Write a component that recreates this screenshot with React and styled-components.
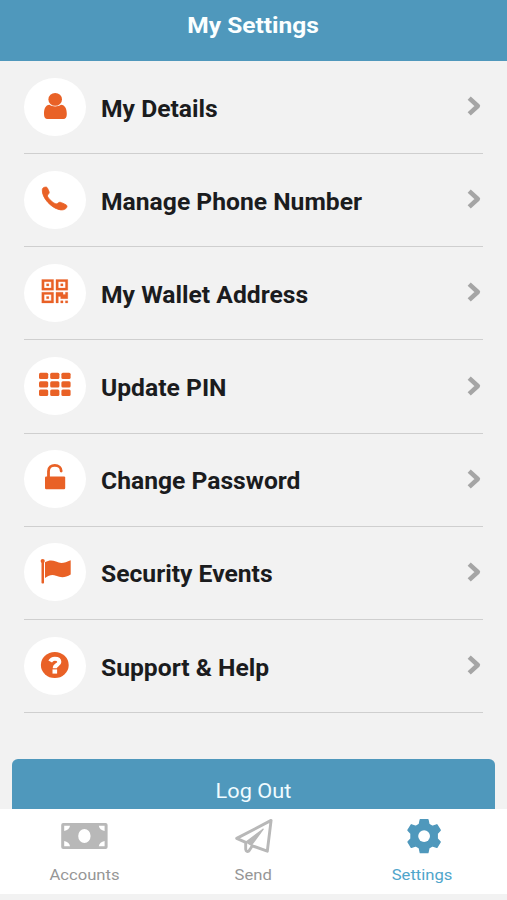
import React from "react";
import styled, { createGlobalStyle } from "styled-components";

const GlobalStyle = createGlobalStyle`
  * { box-sizing: border-box; }
  html, body { margin: 0; padding: 0; overflow: hidden; background: #f2f2f2; }
`;

const Screen = styled.div`
  display: flex;
  flex-direction: column;
  height: 900px;
  overflow: hidden;
  background: #f2f2f2;
  font-family: Roboto, "Liberation Sans", sans-serif;
`;

const Header = styled.header`
  flex: none;
  display: flex;
  justify-content: center;
  height: 61px;
  padding-top: 9px;
  background: #4f98bc;
`;

const Title = styled.h1`
  margin: 0;
  font-size: 22.4px;
  line-height: 33px;
  font-weight: 700;
  color: #fbffff;
  transform: scaleX(1.095);
`;

const Content = styled.main`
  flex: 1;
  min-height: 0;
  display: flex;
  flex-direction: column;
  overflow: hidden;
`;

const List = styled.ul`
  flex: none;
  list-style: none;
  margin: 0 24px;
  padding: 0;
`;

const Row = styled.li`
  display: flex;
  align-items: center;
  height: 93.17px;
  padding-bottom: 1px;
  border-bottom: 1.5px solid #cfcfcf;
`;

const IconDisc = styled.div`
  flex: none;
  width: 62px;
  height: 58px;
  border-radius: 50%;
  background: #fff;
  color: #e96126;
`;

const RowIcon = styled.svg`
  display: block;
  width: 62px;
  height: 58px;
  fill: currentColor;
`;

const RowLabel = styled.span`
  flex: 1;
  margin: 6px 0 0 15px;
  font-size: 23px;
  line-height: 30px;
  font-weight: 700;
  color: #1b1c1e;
  white-space: nowrap;
  transform: scaleX(1.072);
  transform-origin: left center;
`;

const Chevron = styled.svg`
  flex: none;
  width: 15px;
  height: 20px;
  margin-right: 1px;
  margin-bottom: 1px;
  fill: none;
  stroke: #a5a5a5;
  stroke-width: 4.6;
  stroke-linejoin: round;
`;

const LogOutButton = styled.button`
  flex: none;
  height: 64px;
  margin: 46px 12px 0;
  padding: 0;
  border: 0;
  border-radius: 6px;
  background: #4f98bc;
  color: #f0fbff;
  font-family: inherit;
  font-size: 20.5px;
`;

const ButtonText = styled.span`
  display: block;
  transform: scaleX(1.06);
`;

const TabBar = styled.nav`
  flex: none;
  display: grid;
  grid-template-columns: repeat(3, 1fr);
  height: 85px;
  margin-bottom: 6px;
  background: #fff;
`;

const Tab = styled.a`
  display: flex;
  flex-direction: column;
  align-items: center;
  padding-top: 6px;
  color: ${({ $active }) => ($active ? "#4fa5cb" : "#969696")};
`;

const TabIcon = styled.svg`
  width: 60px;
  height: 42px;
  color: ${({ $active }) => ($active ? "#4f98bc" : "#b8b8b8")};
  fill: currentColor;
`;

const TabLabel = styled.span`
  margin-top: 8px;
  font-size: 15.4px;
  line-height: 20px;
  transform: scaleX(1.08);
`;

const Finder = ({ x, y }) => (
  <path d={`M${x} ${y}h5v5h-5zm1 1v3h3v-3zm1 1h1v1h-1z`} fillRule="evenodd" />
);

const icons = {
  user: (
    <>
      <path d="M20 36C20 30.5 21.5 27.2 25.5 26.8C28.5 29 33.8 29 37 26.8C41 27.2 42.8 30.5 42.8 36C42.8 39.6 41.6 41 39.3 41H23.5C21.2 41 20 39.6 20 36Z" />
      <ellipse cx="31.2" cy="21.4" rx="6.8" ry="6.4" />
    </>
  ),
  phone: (
    <path
      d="M18.3 18.7C18.5 16.8 20 16.1 22 16.1C23 16.1 23.4 17 24 18.2L25.2 21C25.6 22.7 23.2 23.6 23.4 25C24 27.4 29.3 32.2 32 32.9C33.6 33.1 34.6 31.1 36 31.2C37.5 31.5 40 32.7 42.1 33.9C43.2 34.5 43.2 35.5 42.6 36.6C41.7 38.3 39.6 39.1 36.7 38.9C28 37.8 17.6 27 18.3 18.7Z"
      stroke="currentColor"
      strokeWidth="0.8"
    />
  ),
  qr: (
    <g
      transform="translate(17.8 15.5) scale(2.36 2.13)"
      stroke="currentColor"
      strokeWidth="0.12"
    >
      <Finder x={0} y={0} />
      <Finder x={6} y={0} />
      <Finder x={0} y={6} />
      <path d="M6 6h3v1h1v-1h1v3h-3v-1h-1v3h-1zM8 10h1v1h-1zM10 10h1v1h-1z" />
    </g>
  ),
  keypad: [15.8, 24.3, 32.6].map((y) =>
    [15, 26.2, 37.4].map((x) => (
      <rect key={`${x}-${y}`} x={x} y={y} width="9.2" height="6.3" rx="1.5" />
    ))
  ),
  unlock: (
    <>
      <rect x="21" y="26.4" width="20.2" height="12.8" rx="1.2" />
      <path
        d="M24.5 27.4V21.2C24.5 17.4 27.2 15.4 30.8 15.4C34.6 15.4 37.2 17.8 37.2 21"
        fill="none"
        stroke="currentColor"
        strokeWidth="2.8"
        strokeLinecap="round"
      />
    </>
  ),
  flag: (
    <>
      <ellipse cx="18.7" cy="18" rx="2.1" ry="2" />
      <rect x="17.5" y="18" width="2.5" height="22.5" rx="0.8" />
      <path d="M21 19.2C25 17 28 16.9 32 18.6C37 21 41 19.8 46.7 17.2V31.5C41 35 37 34.8 32 32.8C28 31.2 25 32.4 21 34.9Z" />
    </>
  ),
  help: (
    <>
      <ellipse cx="30.8" cy="28" rx="13.9" ry="13.1" />
      <path
        d="M26.2 24.5C27.2 22.5 28.8 21.8 30.8 21.8C33.6 21.8 35.3 23 35.3 25C35.3 28 30.8 27.6 30.8 31.2"
        fill="none"
        stroke="#fff"
        strokeWidth="4.1"
      />
      <rect x="28.5" y="32.4" width="4.6" height="4.2" fill="#fff" />
    </>
  ),
};

const settings = [
  ["user", "My Details"],
  ["phone", "Manage Phone Number"],
  ["qr", "My Wallet Address"],
  ["keypad", "Update PIN"],
  ["unlock", "Change Password"],
  ["flag", "Security Events"],
  ["help", "Support & Help"],
];

const CashIcon = () => (
  <TabIcon viewBox="0.6 0 60 42">
    <path
      fillRule="evenodd"
      d="M8.8 8H51.2Q53.2 8 53.2 10V32Q53.2 34 51.2 34H8.8Q6.8 34 6.8 32V10Q6.8 8 8.8 8ZM36.2 21A6.2 7 0 1 0 23.8 21A6.2 7 0 1 0 36.2 21ZM9.8 10.8V16Q14.8 15 15.6 10.8ZM44.4 10.8Q45.2 15 50.2 16V10.8ZM9.8 26V31.2H15.6Q14.8 27 9.8 26ZM50.2 26Q45.2 27 44.4 31.2H50.2Z"
    />
  </TabIcon>
);

const SendIcon = () => (
  <TabIcon viewBox="0.3 0 60 42">
    <g stroke="currentColor" strokeLinejoin="round">
      <path
        d="M47.4 5.4L13 23.4L22 27.4V34.2Q22.6 37.6 25.2 36L28.6 30.8L43.6 36.2Z"
        fill="none"
        strokeWidth="2.9"
      />
      <path d="M22.4 27L39.4 14.2L27.6 30.2Z" strokeWidth="1.4" />
      <path d="M24.8 30.2V33" stroke="#fff" strokeWidth="1.4" />
    </g>
  </TabIcon>
);

const GearIcon = () => (
  <TabIcon $active viewBox="0 0 60 42">
    <path
      d="M27.3 4.6H34.9L35.9 9.3L39.3 11.4L43.9 9.8L47.2 15.2L44.2 18.4V23.8L47.2 27L43.9 32.4L39.3 30.8L35.9 32.9L34.9 37.6H27.3L26.3 32.9L22.9 30.8L18.3 32.4L15 27L18 23.8V18.4L15 15.2L18.3 9.8L22.9 11.4L26.3 9.3Z"
      stroke="currentColor"
      strokeWidth="1.4"
      strokeLinejoin="round"
    />
    <circle cx="31.1" cy="21.1" r="5.9" fill="#fff" />
  </TabIcon>
);

export default function App() {
  return (
    <Screen>
      <GlobalStyle />
      <Header>
        <Title>My Settings</Title>
      </Header>
      <Content>
        <List>
          {settings.map(([icon, label]) => (
            <Row key={icon}>
              <IconDisc>
                <RowIcon viewBox="0 0 62 58">{icons[icon]}</RowIcon>
              </IconDisc>
              <RowLabel>{label}</RowLabel>
              <Chevron viewBox="0 0 15 20">
                <path d="M2.2 2.1L10.8 10L2.2 17.9" />
              </Chevron>
            </Row>
          ))}
        </List>
        <LogOutButton>
          <ButtonText>Log Out</ButtonText>
        </LogOutButton>
      </Content>
      <TabBar>
        <Tab>
          <CashIcon />
          <TabLabel>Accounts</TabLabel>
        </Tab>
        <Tab>
          <SendIcon />
          <TabLabel>Send</TabLabel>
        </Tab>
        <Tab $active>
          <GearIcon />
          <TabLabel>Settings</TabLabel>
        </Tab>
      </TabBar>
    </Screen>
  );
}
